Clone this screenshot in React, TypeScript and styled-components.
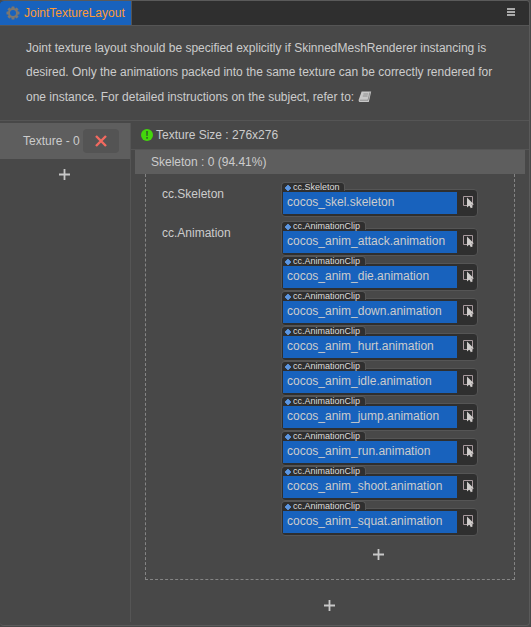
import React from "react";
import styled, { createGlobalStyle } from "styled-components";

const Global = createGlobalStyle`
  *, *::before, *::after { box-sizing: border-box; }
  html, body { margin: 0; background: #484848; }
  body { font-family: "Liberation Sans", Arial, sans-serif; font-size: 12px; color: #cccccc; overflow: hidden; }
  svg { display: block; flex: none; }
`;

const Panel = styled.section`
  width: 530px;
  height: 626px;
  display: flex;
  flex-direction: column;
  background: #484848;
  border: 1px solid #5a5a5a;
  border-left: 0;
  border-radius: 4px;
  overflow: hidden;
`;
const Header = styled.header`
  flex: none;
  height: 25px;
  display: flex;
  justify-content: space-between;
  background: #2f2f2f;
  border-bottom: 1px solid #555;
`;
const Tab = styled.div`
  width: 132px;
  display: flex;
  align-items: center;
  gap: 4px;
  padding: 0 0 0 6px;
  background: #1862bd;
  border-right: 1px solid #555;
  color: #fd9a35;
  white-space: nowrap;
`;
const TabTitle = styled.span`
  font-size: 12px;
  line-height: 16px;
`;
const MenuButton = styled.div`
  padding: 7px 13px 0 0;
`;
const Description = styled.div`
  flex: none;
  height: 95px;
  padding: 10px 0 0 26px;
  line-height: 24.3px;
  border-bottom: 1px solid #555;
  white-space: nowrap;
`;
const Line = styled.div`
  display: flex;
  align-items: center;
  gap: 4px;
`;
const Body = styled.div`
  display: flex;
  flex: none;
  height: 501px;
`;
const Sidebar = styled.aside`
  width: 131px;
  height: 499px;
  margin-top: 2px;
  border-right: 1px solid #555;
`;
const TextureItem = styled.div`
  height: 36px;
  display: flex;
  align-items: center;
  padding-left: 23px;
  gap: 3px;
  background: #5e5e5e;
`;
const DeleteButton = styled.div`
  width: 36px;
  height: 24px;
  border-radius: 4px;
  background: #545454;
  display: flex;
  align-items: center;
  justify-content: center;
`;
const AddRow = styled.div<{ $top: number; $left: number }>`
  display: flex;
  padding: ${(p) => p.$top}px 0 0 ${(p) => p.$left}px;
`;
const Main = styled.main`
  width: 398px;
`;
const SizeRow = styled.div`
  height: 29px;
  display: flex;
  align-items: center;
  gap: 3px;
  padding: 0 0 1px 10px;
  border-bottom: 1px solid #555;
`;
const SkeletonTitle = styled.div`
  height: 24px;
  width: 390px;
  margin-left: 4px;
  padding-left: 16px;
  line-height: 24px;
  background: #5e5e5e;
`;
const DashedBox = styled.div`
  width: 370px;
  height: 406px;
  margin-left: 14px;
  border: 1px dashed #858585;
  border-top: 0;
  padding: 8px 0 0 16px;
`;
const Property = styled.div`
  display: grid;
  grid-template-columns: 119px 197px;
  margin-bottom: 4px;
`;
const Label = styled.span`
  line-height: 16px;
  padding-top: 4px;
`;
const Asset = styled.div`
  height: 35px;
`;
const AssetType = styled.div<{ $width: number }>`
  position: relative;
  z-index: 1;
  width: ${(p) => p.$width}px;
  height: 9px;
  display: flex;
  align-items: center;
  gap: 2px;
  padding: 1px 0 0 3px;
  background: #2f2f2f;
  border: 1px solid #555;
  border-bottom: 0;
  border-radius: 4px 4px 0 0;
  color: #dedede;
  font-size: 9px;
  line-height: 9px;
  white-space: nowrap;
`;
const AssetField = styled.div`
  width: 197px;
  height: 28px;
  margin-top: -2px;
  display: flex;
  border: 1px solid #555;
  border-radius: 0 4px 4px 4px;
  background: #2f2f2f;
  padding: 2px 1px;
`;
const AssetName = styled.div`
  width: 174px;
  height: 22px;
  padding-left: 4px;
  line-height: 20px;
  background: #1862bd;
  white-space: nowrap;
`;
const Picker = styled.div`
  padding: 4px 0 0 6px;
`;

const Gear = () => (
  <svg width="14" height="14" viewBox="0 0 14 14">
    <g fill="#7c7770">
      {[0, 45, 90, 135].map((a) => (
        <rect key={a} x="5.5" y="0.5" width="3" height="13" rx=".5" transform={`rotate(${a} 7 7)`} />
      ))}
      <circle cx="7" cy="7" r="5" />
    </g>
    <circle cx="7" cy="7" r="3" fill="#1862bd" />
  </svg>
);
const Menu = () => (
  <svg width="9" height="9" viewBox="0 0 9 9" shapeRendering="crispEdges">
    <path d="M0 0h8v2H0zM0 3h8v2H0zM0 6h8v2H0z" fill="#aaa" />
  </svg>
);
const Book = () => (
  <svg width="14" height="12" viewBox="0 0 14 12">
    <path d="M3.6 .5h9.6L10.8 11H1.4Q.2 10.6 .8 8.6z" fill="#c8c8c8" />
    <path d="M5.4 3h4.8M4.8 5h4.8M1.8 9.2h8.2L11.9 1.4" fill="none" stroke="#777" strokeWidth=".7" />
  </svg>
);
const Plus = () => (
  <svg width="11" height="11" viewBox="0 0 11 11">
    <path d="M0 4.6h11v1.8H0zM4.6 0h1.8v11H4.6z" fill="#c8c8c8" />
  </svg>
);
const Cross = () => (
  <svg width="12" height="12" viewBox="0 0 12 12">
    <path d="M1 1 11 11M11 1 1 11" stroke="#f26a60" strokeWidth="2.4" />
  </svg>
);
const Status = () => (
  <svg width="12" height="12" viewBox="0 0 12 12">
    <circle cx="6" cy="6" r="6" fill="#43d70c" />
    <path d="M5 2h2.1l-.3 5H5.3zM5.1 8h1.9v1.8H5.1z" fill="#357522" />
  </svg>
);
const Dot = () => (
  <svg width="6" height="6" viewBox="0 0 6 6">
    <path d="M3 0 6 3 3 6 0 3z" fill="#5b96e2" stroke="#5b96e2" strokeWidth=".8" strokeLinejoin="round" />
  </svg>
);
const PickIcon = () => (
  <svg width="12" height="13" viewBox="0 0 12 13">
    <path d="M.5 .5h9v9h-9z" fill="none" stroke="#a99a9e" strokeWidth="1" />
    <path d="M4 1.6 11 8.4H8.4L9.8 11.2 7.8 12.2 6.4 9.4 4 11.4z" fill="#d0cdcb" />
  </svg>
);

const AssetInput = ({ type, name }: { type: string; name: string }) => (
  <Asset>
    <AssetType $width={type === "cc.Skeleton" ? 64 : 85}>
      <Dot />
      <span>{type}</span>
    </AssetType>
    <AssetField>
      <AssetName>{name}</AssetName>
      <Picker>
        <PickIcon />
      </Picker>
    </AssetField>
  </Asset>
);

const clips = ["attack", "die", "down", "hurt", "idle", "jump", "run", "shoot", "squat"];

export default function App() {
  return (
    <>
      <Global />
      <Panel>
        <Header>
          <Tab>
            <Gear />
            <TabTitle>JointTextureLayout</TabTitle>
          </Tab>
          <MenuButton>
            <Menu />
          </MenuButton>
        </Header>
        <Description>
          <Line>Joint texture layout should be specified explicitly if SkinnedMeshRenderer instancing is</Line>
          <Line>desired. Only the animations packed into the same texture can be correctly rendered for</Line>
          <Line>
            one instance. For detailed instructions on the subject, refer to: <Book />
          </Line>
        </Description>
        <Body>
          <Sidebar>
            <TextureItem>
              <span>Texture - 0</span>
              <DeleteButton>
                <Cross />
              </DeleteButton>
            </TextureItem>
            <AddRow $top={10} $left={59}>
              <Plus />
            </AddRow>
          </Sidebar>
          <Main>
            <SizeRow>
              <Status />
              <span>Texture Size : 276x276</span>
            </SizeRow>
            <SkeletonTitle>Skeleton : 0 (94.41%)</SkeletonTitle>
            <DashedBox>
              <Property>
                <Label>cc.Skeleton</Label>
                <AssetInput type="cc.Skeleton" name="cocos_skel.skeleton" />
              </Property>
              <Property>
                <Label>cc.Animation</Label>
                <div>
                  {clips.map((clip) => (
                    <AssetInput key={clip} type="cc.AnimationClip" name={`cocos_anim_${clip}.animation`} />
                  ))}
                </div>
              </Property>
              <AddRow $top={9} $left={211}>
                <Plus />
              </AddRow>
            </DashedBox>
            <AddRow $top={20} $left={193}>
              <Plus />
            </AddRow>
          </Main>
        </Body>
      </Panel>
    </>
  );
}
